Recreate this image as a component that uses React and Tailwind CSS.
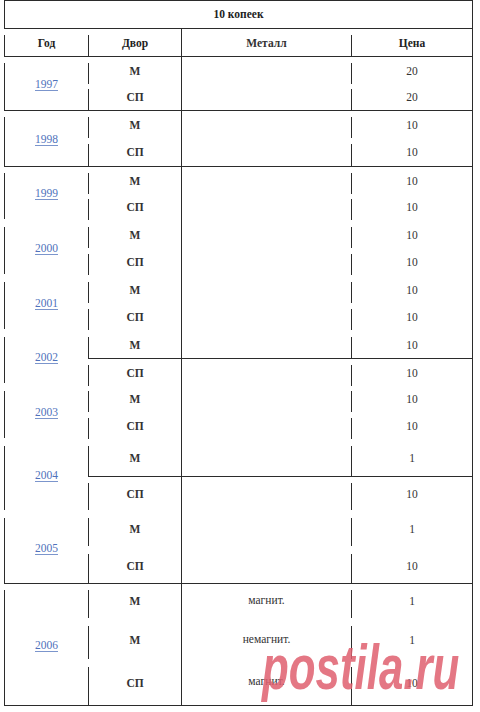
import React from 'react';
import clsx from 'clsx';

const line = 'border-[#2b2b2b]';

const rows = [
    { year: '1997', span: 2, top: true, metal: { span: 2 }, dvor: 'М', price: '20' },
    { dvor: 'СП', price: '20', last: true },
    { year: '1998', span: 2, top: true, metal: { span: 2 }, dvor: 'М', price: '10' },
    { dvor: 'СП', price: '10', last: true },
    { year: '1999', span: 2, top: true, metal: { span: 7 }, dvor: 'М', price: '10' },
    { dvor: 'СП', price: '10' },
    { year: '2000', span: 2, dvor: 'М', price: '10' },
    { dvor: 'СП', price: '10' },
    { year: '2001', span: 2, dvor: 'М', price: '10' },
    { dvor: 'СП', price: '10' },
    { year: '2002', span: 2, dvor: 'М', price: '10', last: true },
    { dvor: 'СП', price: '10', top: true, metal: { span: 4 } },
    { year: '2003', span: 2, dvor: 'М', price: '10' },
    { dvor: 'СП', price: '10' },
    { year: '2004', span: 2, dvor: 'М', price: '1', last: true },
    { dvor: 'СП', price: '10', top: true, metal: { span: 3 } },
    { year: '2005', span: 2, dvor: 'М', price: '1' },
    { dvor: 'СП', price: '10', last: true },
    { year: '2006', span: 3, top: true, metal: { span: 1, text: 'магнит.' }, dvor: 'М', price: '1' },
    { dvor: 'М', price: '1', metal: { span: 1, text: 'немагнит.' } },
    { dvor: 'СП', price: '10', last: true, metal: { span: 1, text: 'магнит.' } },
];

const spanClass = {
    1: 'row-span-1',
    2: 'row-span-2',
    3: 'row-span-3',
    4: 'row-span-4',
    7: 'row-span-7',
};

// groups that end on a full horizontal rule
const yearLast = { '1997': true, '1998': true, '2005': true, '2006': true };

const Seg = ({ children, top, last, className }) => (
    <div className={clsx('flex flex-col', top && clsx('border-t', line), className)}>
        <div
            className={clsx(
                'flex-1 border-l flex items-center justify-center pb-[4px] mt-[6px]',
                line,
                last ? 'mb-0' : 'mb-[2px]'
            )}
        >
            {children}
        </div>
    </div>
);

const Metal = ({ children, top, span, className }) => (
    <div
        className={clsx(
            'border-l flex items-center justify-center text-[#333]',
            line,
            spanClass[span],
            top && 'border-t',
            className
        )}
    >
        {children}
    </div>
);

export default function App() {
    return (
        <div className="relative h-[712px] w-[480px] overflow-hidden bg-white font-['Liberation_Serif',serif] text-[11.5px] text-[#222]">
            <div
                className={clsx(
                    'ml-[4px] w-[469px] grid grid-cols-[84px_93px_170px_121px] border-t border-r border-b',
                    line,
                    'grid-rows-[28px_27px_27px_27px_28px_28px_27px_28px_27px_28px_27px_28px_27px_27px_27px_28px_36px_36px_36px_35px_37px_41px_44px]'
                )}
            >
                <div className={clsx('col-span-4 border-l border-b flex items-center justify-center font-bold', line)}>
                    10 копеек
                </div>

                <Seg className="font-bold">Год</Seg>
                <Seg className="font-bold">Двор</Seg>
                <Metal span={1} className="pt-[2px] font-bold text-[#222]">Металл</Metal>
                <Seg className="font-bold">Цена</Seg>

                {rows.map((r, i) => (
                    <React.Fragment key={i}>
                        {r.year && (
                            <Seg top={r.top} last={yearLast[r.year]} className={spanClass[r.span]}>
                                <span className="text-[#4f72bb] underline underline-offset-2 decoration-[#7b95cc]">{r.year}</span>
                            </Seg>
                        )}
                        <Seg top={r.top} last={r.last} className="font-bold text-[#333]">
                            {r.dvor}
                        </Seg>
                        {r.metal && (
                            <Metal top={r.top} span={r.metal.span} className="pb-[2px]">
                                {r.metal.text}
                            </Metal>
                        )}
                        <Seg top={r.top} last={r.last} className="text-[#333]">
                            {r.price}
                        </Seg>
                    </React.Fragment>
                ))}
            </div>

            <div className="absolute left-[262px] top-[637px] origin-top-left scale-x-[1.02] scale-y-[1.45] font-['Liberation_Sans',sans-serif] font-bold italic text-[43px] leading-none text-[#e0606f] opacity-85 whitespace-nowrap">
                postila.ru
            </div>
        </div>
    );
}
